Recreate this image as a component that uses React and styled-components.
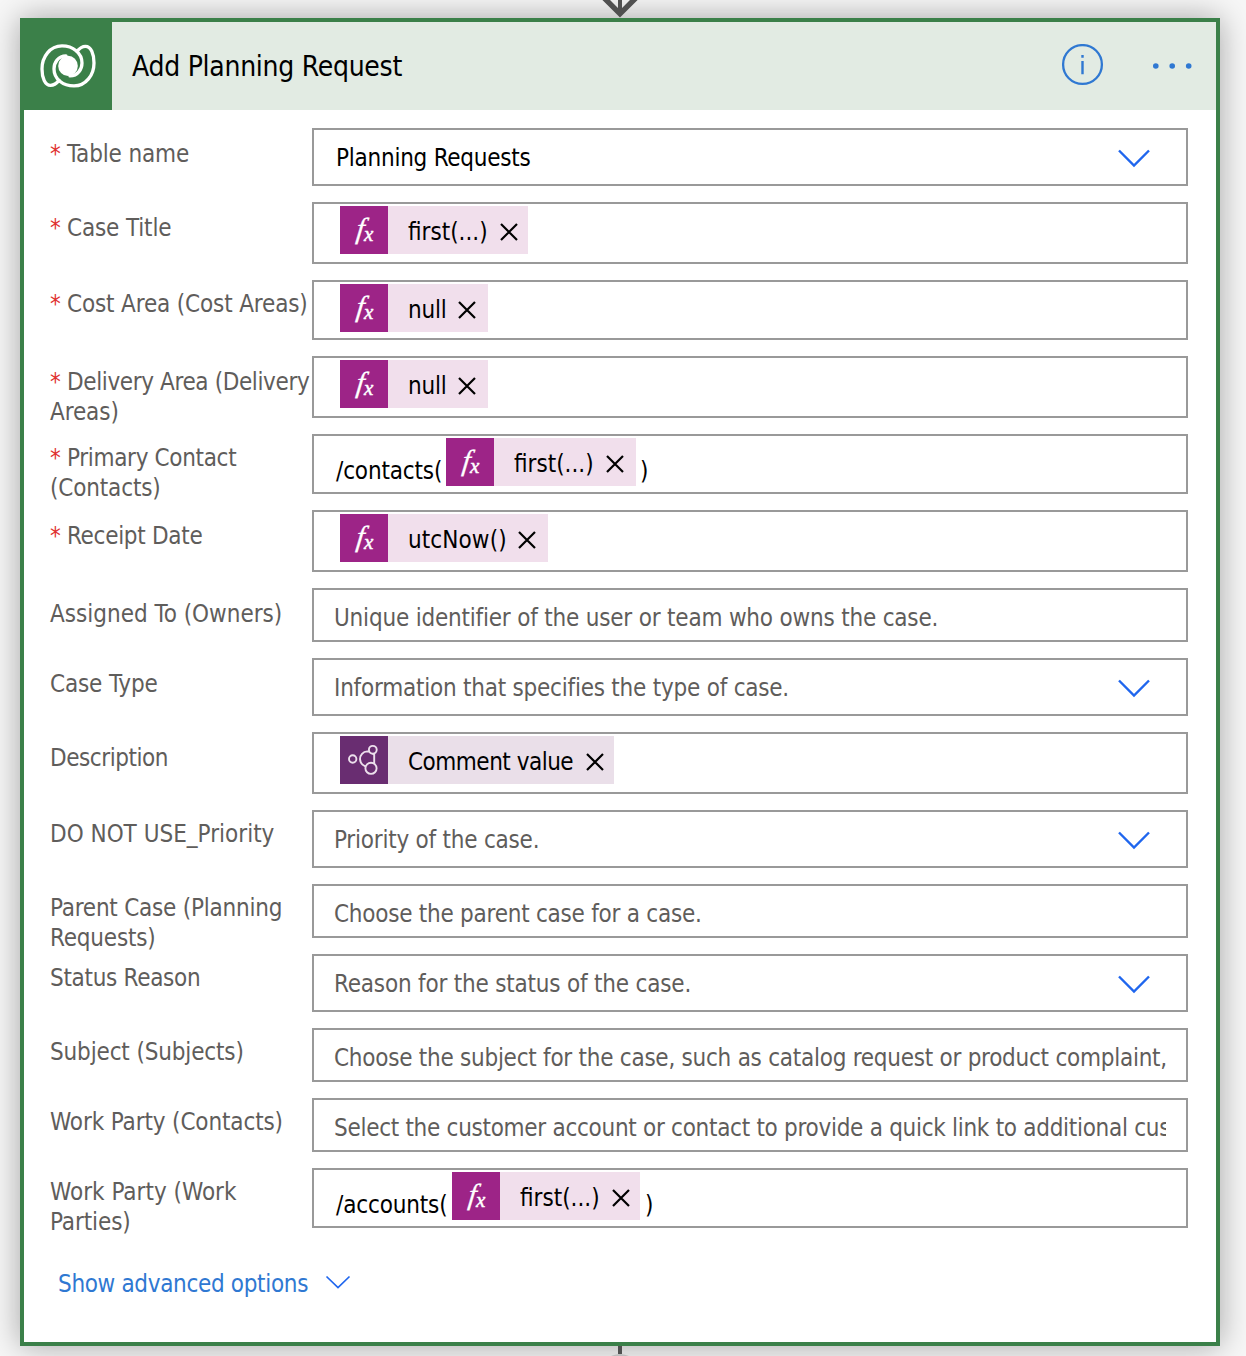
import React from "react";
import styled, { createGlobalStyle } from "styled-components";

const GlobalStyle = createGlobalStyle`
  *, *::before, *::after { box-sizing: border-box; }
  html, body { margin: 0; padding: 0; background: #f7f7f7; }
  body { overflow: hidden; }
`;

const Page = styled.div`
  display: flex;
  flex-direction: column;
  width: 1246px;
  height: 1356px;
  padding-left: 20px;
  overflow: hidden;
  background: #f7f7f7;
  font-family: "DejaVu Sans Condensed", "DejaVu Sans", "Noto Sans", sans-serif;
  font-stretch: condensed;
  font-size: 24px;
  line-height: 30px;
  color: #000;
`;

const Connector = styled.div`
  display: flex;
  flex: none;
  justify-content: center;
  width: 1200px;
  height: ${(p) => p.$height}px;
  z-index: 1;

  svg { display: block; }
`;

const Card = styled.section`
  display: flex;
  flex: none;
  flex-direction: column;
  width: 1200px;
  height: 1328px;
  border: 4px solid #3b8049;
  background: #fff;
  box-shadow: 0 0 30px rgba(0, 0, 0, 0.34);
`;

const Header = styled.header`
  display: flex;
  align-items: center;
  height: 88px;
  background: #e2ebe3;
`;

const Logo = styled.div`
  width: 88px;
  height: 88px;
  background: #3b8049;

  svg { display: block; }
`;

const Title = styled.h1`
  flex: 1;
  margin: 2px 0 0 20px;
  font-size: 28px;
  font-weight: 400;
  line-height: 34px;
  letter-spacing: -0.27px;
`;

const HeaderActions = styled.div`
  display: flex;
  align-items: center;
  gap: 48px;
  padding-right: 23px;

  svg { display: block; }
`;

const Form = styled.div`
  display: flex;
  flex-direction: column;
  gap: 16px;
  padding: 18px 28px 0 26px;
`;

const Row = styled.div`
  display: flex;
  height: ${(p) => p.$height}px;
`;

const Label = styled.label`
  flex: none;
  width: 262px;
  padding-top: ${(p) => p.$top}px;
  color: #5f5d5b;
  white-space: nowrap;
`;

const LabelLine = styled.span`
  display: block;
  letter-spacing: ${(p) => p.$tracking || 0}px;
`;

const Star = styled.span`
  display: inline-block;
  width: 17px;
  color: #e0312f;
  letter-spacing: 0;
`;

const Field = styled.div`
  display: flex;
  flex: 1;
  min-width: 0;
  align-items: ${(p) => (p.$tokens ? "flex-start" : "center")};
  padding: ${(p) => (p.$tokens ? "2px 20px 0 22px" : "0 20px 0 20px")};
  border: 2px solid #999;
  background: #fff;
`;

const FieldText = styled.span`
  flex: 1;
  min-width: 0;
  overflow: hidden;
  white-space: nowrap;
  padding-top: ${(p) => p.$drop}px;
  padding-left: ${(p) => (p.$filled ? 2 : 0)}px;
  color: ${(p) => (p.$filled ? "#000" : "#5f5d5b")};
  letter-spacing: ${(p) => p.$tracking}px;
`;

const Caret = styled.svg`
  flex: none;
  display: block;
  width: 36px;
  height: 20px;
  margin: 2px 14px 0 0;
`;

const Literal = styled.span`
  flex: none;
  width: ${(p) => p.$width}px;
  padding-top: 18px;
  white-space: nowrap;
  letter-spacing: -0.15px;
`;

const Chip = styled.span`
  display: flex;
  flex: none;
  width: ${(p) => p.$width}px;
  height: 48px;
  margin-left: ${(p) => p.$indent || 0}px;
  margin-right: ${(p) => p.$after || 0}px;
  background: ${(p) => (p.$kind === "fx" ? "#f1dfec" : "#eadfe9")};
`;

const ChipIcon = styled.span`
  flex: none;
  width: 48px;
  height: 48px;
  background: ${(p) => (p.$kind === "fx" ? "#9d2487" : "#692d71")};

  svg { display: block; }
`;

const ChipText = styled.span`
  flex: 1;
  padding: 11px 0 0 20px;
  white-space: nowrap;
  letter-spacing: ${(p) => p.$tracking || 0}px;
`;

const ChipClose = styled.svg`
  flex: none;
  display: block;
  width: 20px;
  height: 20px;
  margin: 16px ${(p) => p.$inset}px 0 0;
`;

const Advanced = styled.a`
  display: flex;
  align-items: center;
  gap: 17px;
  margin: 41px 0 0 34px;
  color: #2f78d2;
  letter-spacing: -0.33px;

  svg { display: block; margin-top: -4px; }
`;

const ROWS = [
  { h: 58, top: 11, required: true, label: [["Table name", -0.15]], text: "Planning Requests", tracking: -0.25, filled: true, caret: true },
  { h: 62, top: 11, required: true, label: [["Case Title", -0.15]], chip: { text: "first(...)", width: 188 } },
  { h: 60, top: 9, required: true, label: [["Cost Area (Cost Areas)", -0.15]], chip: { text: "null", width: 148, tracking: -0.2, inset: 11 } },
  { h: 62, top: 11, required: true, label: [["Delivery Area (Delivery", -0.38], ["Areas)", -0.1]], chip: { text: "null", width: 148, tracking: -0.2, inset: 11 } },
  { h: 60, top: 9, required: true, label: [["Primary Contact", -0.33], ["(Contacts)", -0.15]], before: ["/contacts(", 109], chip: { text: "first(...)", width: 190, after: 4, inset: 11 }, end: ")" },
  { h: 62, top: 11, required: true, label: [["Receipt Date", -0.3]], chip: { text: "utcNow()", width: 208, tracking: 0.1, inset: 11 } },
  { h: 54, top: 11, label: [["Assigned To (Owners)", 0]], text: "Unique identifier of the user or team who owns the case.", tracking: -0.2, drop: 5 },
  { h: 58, top: 11, label: [["Case Type", -0.15]], text: "Information that specifies the type of case.", tracking: -0.23, caret: true },
  { h: 62, top: 11, label: [["Description", -0.45]], chip: { kind: "process", text: "Comment value", width: 274, tracking: -0.5, inset: 9.5 } },
  { h: 58, top: 9, label: [["DO NOT USE_Priority", 0]], text: "Priority of the case.", tracking: -0.23, caret: true },
  { h: 54, top: 9, label: [["Parent Case (Planning", -0.23], ["Requests)", -0.2]], text: "Choose the parent case for a case.", tracking: -0.25, drop: 5 },
  { h: 58, top: 9, label: [["Status Reason", -0.3]], text: "Reason for the status of the case.", tracking: -0.2, caret: true },
  { h: 54, top: 9, label: [["Subject (Subjects)", -0.15]], text: "Choose the subject for the case, such as catalog request or product complaint,", tracking: -0.26, drop: 5 },
  { h: 54, top: 9, label: [["Work Party (Contacts)", -0.13]], text: "Select the customer account or contact to provide a quick link to additional customer", tracking: -0.29, drop: 5 },
  { h: 60, top: 9, label: [["Work Party (Work", 0], ["Parties)", -0.1]], before: ["/accounts(", 115], chip: { text: "first(...)", width: 188, after: 5 }, end: ")" },
];

const SWIRL =
  "M2 10C10 10 14 3 14 -3C14 -13 5 -20 -6 -20C-18 -20 -26 -9 -26 3C-26 12 -23 19.5 -17.5 19.5C-14 19.5 -11 17 -9 14.5";

function DataverseLogo() {
  return (
    <svg width="88" height="88" viewBox="0 0 88 88">
      <g transform="translate(44 43.9)" fill="none" stroke="#fff" strokeWidth="3.3" strokeLinecap="round">
        <path d={SWIRL} />
        <path d={SWIRL} transform="rotate(180)" />
        <ellipse rx="9.8" ry="10.2" fill="#fff" stroke="none" />
      </g>
    </svg>
  );
}

function FxIcon() {
  return (
    <svg width="48" height="48" viewBox="0 0 48 48" fill="#fff" fontFamily='"Liberation Serif", serif' fontStyle="italic">
      <text transform="translate(15.6 31.8) skewX(-7)" fontSize="29" stroke="#fff" strokeWidth="0.3">f</text>
      <text x="24" y="34.5" fontSize="21" stroke="#fff" strokeWidth="0.5">x</text>
    </svg>
  );
}

function ProcessIcon() {
  return (
    <svg width="48" height="48" viewBox="0 0 48 48" fill="#692d71" stroke="#ecdfec" strokeWidth="1.9">
      <circle cx="12.7" cy="23" r="3.7" />
      <path d="M34.2 18V29M34.2 19C32.8 16.9 30.2 15.4 27.3 15.4A7.6 7.6 0 1 0 28 30.6" fill="none" />
      <circle cx="32.8" cy="13.8" r="3.9" />
      <circle cx="31" cy="32.3" r="5.6" />
    </svg>
  );
}

function Token({ kind = "fx", text, width, tracking, indent, after, inset = 9 }) {
  return (
    <Chip $kind={kind} $width={width} $indent={indent} $after={after}>
      <ChipIcon $kind={kind}>{kind === "fx" ? <FxIcon /> : <ProcessIcon />}</ChipIcon>
      <ChipText $tracking={tracking}>{text}</ChipText>
      <ChipClose $inset={inset} viewBox="0 0 20 20">
        <path d="M2 2L18 18M18 2L2 18" fill="none" stroke="#000" strokeWidth="2.2" />
      </ChipClose>
    </Chip>
  );
}

function FormRow({ row }) {
  return (
    <Row $height={row.h}>
      <Label $top={row.top}>
        {row.label.map(([text, tracking], i) => (
          <LabelLine key={text} $tracking={tracking}>
            {row.required && i === 0 && <Star>*</Star>}
            {text}
          </LabelLine>
        ))}
      </Label>
      {row.chip ? (
        <Field $tokens>
          {row.before && <Literal $width={row.before[1]}>{row.before[0]}</Literal>}
          <Token {...row.chip} indent={row.before ? 1 : 4} />
          {row.end && <Literal $width={12}>{row.end}</Literal>}
        </Field>
      ) : (
        <Field>
          <FieldText $filled={row.filled} $tracking={row.tracking} $drop={row.drop || 1}>
            {row.text}
          </FieldText>
          {row.caret && (
            <Caret viewBox="0 0 36 20">
              <path d="M3 2.5L18 17.5L33 2.5" fill="none" stroke="#1f66ee" strokeWidth="2.4" />
            </Caret>
          )}
        </Field>
      )}
    </Row>
  );
}

export default function App() {
  return (
    <>
      <GlobalStyle />
      <Page>
        <Connector $height={18}>
          <svg width="40" height="18" viewBox="0 0 40 18" fill="none" stroke="#505050">
            <path d="M20 0V14" strokeWidth="4" />
            <path d="M1 -5.2L20 13.8L39 -5.2" strokeWidth="5.4" />
          </svg>
        </Connector>
        <Card>
          <Header>
            <Logo><DataverseLogo /></Logo>
            <Title>Add Planning Request</Title>
            <HeaderActions>
              <svg width="44" height="44" viewBox="0 0 44 44">
                <circle cx="21.5" cy="20.5" r="19.4" fill="none" stroke="#2f78d2" strokeWidth="2.3" />
                <path d="M21.5 11V13.8M21.5 17V30.2" fill="none" stroke="#2f78d2" strokeWidth="2.4" />
              </svg>
              <svg width="40" height="8" viewBox="0 0 40 8" fill="#2f78d2">
                <circle cx="2.8" cy="4" r="2.8" />
                <circle cx="19.2" cy="4" r="2.8" />
                <circle cx="35.7" cy="4" r="2.8" />
              </svg>
            </HeaderActions>
          </Header>
          <Form>
            {ROWS.map((row) => <FormRow key={row.label[0][0]} row={row} />)}
          </Form>
          <Advanced>
            Show advanced options
            <svg width="26" height="14" viewBox="0 0 26 14">
              <path d="M1.5 1.5L13 12.5L24.5 1.5" fill="none" stroke="#1f66ee" strokeWidth="1.7" />
            </svg>
          </Advanced>
        </Card>
        <Connector $height={10}>
          <svg width="40" height="10" viewBox="0 0 40 10">
            <circle cx="20" cy="28" r="20" fill="#bdbdbd" />
            <path d="M20 0V8" stroke="#505050" strokeWidth="4" />
          </svg>
        </Connector>
      </Page>
    </>
  );
}
